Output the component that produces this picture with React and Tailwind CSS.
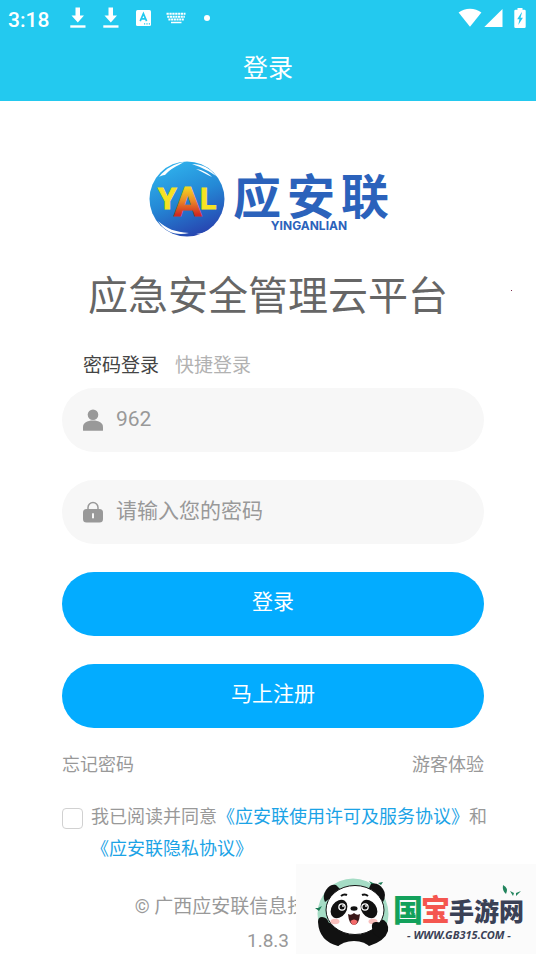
import React, { useState } from "react";

// the arrow is used twice in the status bar
const DownloadIcon = () => (
  <svg width="16" height="22" viewBox="0 0 16 22" fill="currentColor">
    <path d="M5.5 0.5h4.5v8h4L7.8 15.5 1.5 8.5h4z" />
    <rect x="0.3" y="18.3" width="15.2" height="2.4" />
  </svg>
);

const StatusBar = () => (
  <div className="flex h-9 items-center justify-between pl-2 pr-[10px] text-white">
    <div className="flex items-center">
      <span className="w-[62px] pt-1 text-[21px] font-medium leading-6">3:18</span>
      <div className="flex items-center gap-[14px]">
        <div className="flex items-center gap-[17px]">
          <DownloadIcon />
          <DownloadIcon />
          <svg width="16" height="18" viewBox="0 0 16 18">
            <rect x="0" y="1" width="15" height="16" rx="1.5" fill="currentColor" />
            <path
              d="M4.2 12.2 7.4 4.600 10.6 12.2M5.4 9.800h4"
              fill="none"
              stroke="#23c9ef"
              strokeWidth="1.7"
            />
            <path d="M8 14.8h6" stroke="#23c9ef" strokeWidth="1.3" strokeDasharray="1.2 1.2" />
          </svg>
        </div>
        <svg width="20" height="12" viewBox="0 0 20 12" stroke="currentColor" fill="none">
          <path d="M0.5 1.7h19" strokeWidth="2" strokeDasharray="2.3 0.6" />
          <path d="M1.2 4.7h17.6" strokeWidth="2" strokeDasharray="2.1 0.6" />
          <path d="M2.4 7.6h15.4" strokeWidth="2" strokeDasharray="2.1 0.6" />
          <path d="M5 10.5h10.5" strokeWidth="1.5" />
        </svg>
        <span className="ml-1 h-[6px] w-[6px] rounded-full bg-white" />
      </div>
    </div>
    <div className="flex items-center">
      <svg width="24" height="20" viewBox="0 0 24 20" fill="currentColor">
        <path d="M0.6 4.6C6.6-0.6 17.4-0.6 23.4 4.6L12 18.8z" />
      </svg>
      <svg className="ml-[2px]" width="19" height="20" viewBox="0 0 19 20" fill="currentColor">
        <path d="M18.5 1v18H0.3z" />
      </svg>
      <svg className="ml-[11px]" width="12" height="22" viewBox="0 0 12 22">
        <path
          d="M3.5 1h5v1.8h1.9q1.3 0 1.3 1.3v15.6q0 1.3-1.3 1.3H1.6q-1.3 0-1.3-1.3V4.1q0-1.3 1.3-1.3h1.9z"
          fill="currentColor"
        />
        <path d="M7.5 5.5 3.2 12.2h2.2L4.3 18 8.9 10.7H6.5L8 5.5z" fill="#23c9ef" />
      </svg>
    </div>
  </div>
);

const BrandLogo = () => (
  <svg
    className="ml-[149px] block"
    width="250"
    height="90"
    viewBox="0 -8 250 90"
    role="img"
    aria-label="应安联 YINGANLIAN"
  >
    <defs>
      <linearGradient id="ball" x1="0.2" y1="0" x2="0.6" y2="1">
        <stop offset="0" stopColor="#30b5ee" />
        <stop offset="0.5" stopColor="#2489d6" />
        <stop offset="1" stopColor="#2745b0" />
      </linearGradient>
      <linearGradient id="flame" gradientUnits="userSpaceOnUse" x1="0" y1="18" x2="0" y2="60">
        <stop offset="0.15" stopColor="#f6e222" />
        <stop offset="0.5" stopColor="#ec8e25" />
        <stop offset="0.85" stopColor="#d02a22" />
      </linearGradient>
    </defs>
    <circle cx="38" cy="38" r="37.5" fill="url(#ball)" />
    <g fill="#fff">
      <path d="M10 16C17 7 25 3 35 1c-7 4-14 7-19 13-3 0-4 1-6 2z" />
      <path d="M43 3c10 0 18 4 24 12-7-5-13-8-24-12z" />
      <path d="M47 8c7 1 12 4 16 8-6-3-10-5-16-8z" />
      <path d="M9 60c9 8 17 11 31 12-13 3-24-1-31-12z" />
      <path d="M47 73c10-1 16-5 22-11-4 8-11 13-22 11z" />
    </g>
    <g fontFamily="Roboto, sans-serif" fontWeight="700" strokeWidth="1">
      <text x="9" y="48" fontSize="30" fill="#f6e222" stroke="#f6e222">Y</text>
      <text x="25" y="55" fontSize="41" fill="url(#flame)" stroke="url(#flame)">A</text>
      <text x="51" y="48" fontSize="30" fill="#f6e222" stroke="#f6e222">L</text>
    </g>
    <g fontSize="48" fontWeight="700" fill="#2b62bb" fontFamily="'Noto Sans CJK SC', sans-serif">
      <text x="84" y="53">应</text>
      <text x="138" y="53">安</text>
      <text x="192" y="53">联</text>
    </g>
    <text
      x="160"
      y="69"
      fontSize="12"
      fontWeight="700"
      textAnchor="middle"
      fill="#2b62bb"
      fontFamily="Inter, sans-serif"
    >
      YINGANLIAN
    </text>
  </svg>
);

const UserIcon = () => (
  <svg width="22" height="22" viewBox="0 0 22 22" fill="#999">
    <circle cx="11" cy="5.7" r="5.3" />
    <path d="M1 21.200v-3C1 14 5 11.600 11 11.600s10 2.400 10 6.600v3q0 .5-.5.5h-19q-.5 0-.5-.5z" />
  </svg>
);

const LockIcon = () => (
  <svg width="22" height="22" viewBox="0 0 22 22">
    <path d="M6 9V6.500a5 5 0 0 1 10 0V9" fill="none" stroke="#999" strokeWidth="1.500" />
    <rect x="1" y="8" width="20" height="13.500" rx="3.500" fill="#999" />
    <rect x="10" y="12.300" width="2" height="5" fill="#f7f7f7" />
  </svg>
);

const Field = ({ id, label, icon, ...rest }) => (
  <div className="flex h-16 items-center gap-3 rounded-full bg-[#f7f7f7] pl-5 pr-5">
    <label htmlFor={id} aria-label={label}>
      {icon}
    </label>
    <input
      id={id}
      className="h-full min-w-0 flex-1 bg-transparent pb-[2px] text-[21px] text-[#999] outline-none placeholder:text-[#999]"
      {...rest}
    />
  </div>
);

const SiteBadge = () => (
  <svg
    className="fixed bottom-0 right-0"
    width="240"
    height="90"
    viewBox="0 0 240 90"
    role="img"
    aria-label="国宝手游网"
  >
    <rect width="240" height="90" fill="#fbfbfb" />
    {/* panda */}
    <circle cx="57" cy="50" r="35.5" fill="#a5dcc5" />
    <path d="M73 17l5 7 1-4z" fill="#1b7a55" />
    <path d="M82 19l3 2 2-3M19 44l4 3 3-5-4 2z" fill="#1b7a55" />
    <g fill="#111">
      <path d="M29 38q-3-6 1-12 4-6 10-5l5 5z" />
      <path d="M87 38q4-7 0-13-5-7-12-5l-3 6z" />
      <path d="M22 58q0-5 4-5 5 0 7 6l50 2q-2-5 2-6 8 2 7 12-3 10-19 15H42Q23 77 22 58z" />
    </g>
    <path d="M40 84q7-7 18-7t17 7l-5 2H45z" fill="#fbfbfb" />
    <ellipse cx="59" cy="46" rx="29" ry="24.5" fill="#fff" stroke="#111" />
    <g fill="#111">
      <ellipse cx="43" cy="45" rx="7.500" ry="10" transform="rotate(35 43 45)" />
      <ellipse cx="73" cy="45" rx="7.500" ry="10" transform="rotate(-35 73 45)" />
      <ellipse cx="58" cy="44.5" rx="3.5" ry="2.2" />
    </g>
    <path d="M45 32q3-2.5 6-1M66 31q3-1.5 6 1" stroke="#111" strokeWidth="2" fill="none" />
    <circle cx="46" cy="43" r="3.8" fill="#fff" />
    <circle cx="69" cy="43" r="3.8" fill="#fff" />
    <circle cx="46" cy="43" r="2.5" fill="#111" />
    <circle cx="69" cy="43" r="2.5" fill="#111" />
    <circle cx="47" cy="42" r="0.9" fill="#fff" />
    <circle cx="70" cy="42" r="0.9" fill="#fff" />
    <path d="M52 50q3 2 6-1 3 3 6 1-1 11-6 11t-6-11z" fill="#3a1718" />
    <path d="M54.5 57q3.5-3 7 0-1 4-3.5 4t-3.5-4z" fill="#f26a6a" />
    <ellipse cx="39" cy="57.5" rx="4.5" ry="2.8" fill="#f9bfbd" />
    <ellipse cx="77" cy="57.5" rx="4.5" ry="2.8" fill="#f9bfbd" />
    <path d="M76 64q-1-7 5-6 5 0 9 7l-4 9q-9-2-10-10z" fill="#111" />
    {/* leaves by the name */}
    <path d="M207 21q6 3 3 9-4-3-3-9zM214 27l4 2-1 3zM225 27l-5 2v3z" fill="#23855e" />
    <g fontFamily="'Noto Sans CJK SC', sans-serif" fontWeight="900">
      <text x="97" y="57" fontSize="30" fill="#12a15b">国</text>
      <text x="125" y="57" fontSize="29" fill="#f4564f">宝</text>
      <text x="153" y="57" fontSize="25" fill="#3a4156">手游网</text>
    </g>
    <text
      x="163"
      y="75"
      fontSize="11"
      fontWeight="700"
      fontStyle="italic"
      textAnchor="middle"
      fill="#3a4156"
      fontFamily="'Noto Sans', sans-serif"
    >
      - WWW.GB315.COM -
    </text>
  </svg>
);

export default function App() {
  const [account, setAccount] = useState("962");
  const [password, setPassword] = useState("");
  const [agreed, setAgreed] = useState(false);

  return (
    <div className="bg-white font-[Roboto,'Noto_Sans_CJK_SC',sans-serif] text-[#999]">
      <header className="h-[101px] bg-[#23c9ef]">
        <StatusBar />
        <h1 className="text-center text-[25px] leading-[66px] text-white">登录</h1>
      </header>

      <main className="pt-[52px]">
        <BrandLogo />
        <div className="relative mt-[24px]">
          <h2 className="text-center text-[40px] leading-[60px] text-[#666]">
            应急安全管理云平台
          </h2>
          <span className="absolute right-6 top-[23px] h-px w-px bg-[#803050]" />
        </div>

        <form className="pl-[62px] pr-[52px]" onSubmit={(e) => e.preventDefault()}>
          <div className="mt-[25px] flex gap-4 pl-[21px] text-[19px] leading-[28px]">
            <button type="button" className="text-[#444]">密码登录</button>
            <button type="button" className="text-[#b2b2b2]">快捷登录</button>
          </div>

          <div className="mt-2 flex flex-col gap-7">
            <Field
              id="account"
              label="账号"
              icon={<UserIcon />}
              type="text"
              value={account}
              onChange={(e) => setAccount(e.target.value)}
            />
            <Field
              id="password"
              label="密码"
              icon={<LockIcon />}
              type="password"
              placeholder="请输入您的密码"
              value={password}
              onChange={(e) => setPassword(e.target.value)}
            />
            <button type="submit" className="h-16 rounded-full bg-[#03acff] pb-[2px] text-[21px] text-white">
              登录
            </button>
            <button type="button" className="h-16 rounded-full bg-[#03acff] pb-[2px] text-[21px] text-white">
              马上注册
            </button>
          </div>

          <div className="mt-[23px] flex justify-between text-[18px] leading-[28px]">
            <a href="#forgot">忘记密码</a>
            <a href="#guest">游客体验</a>
          </div>

          <div className="mt-[22px] flex items-start gap-2 text-[18px] leading-[32px]">
            <input
              id="agree"
              type="checkbox"
              checked={agreed}
              onChange={(e) => setAgreed(e.target.checked)}
              className="mt-[7px] h-[21px] w-[21px] shrink-0 appearance-none rounded border border-[#d1d1d1] bg-white checked:bg-[#03acff]"
            />
            <label htmlFor="agree" className="whitespace-nowrap">
              我已阅读并同意
              <a href="#terms" className="text-[#1ba3e6]">《应安联使用许可及服务协议》</a>
              和<br />
              <a href="#privacy" className="text-[#1ba3e6]">《应安联隐私协议》</a>
            </label>
          </div>
        </form>

        <footer className="mt-[26px] text-center text-[19px]">
          <p className="leading-[32px]">© 广西应安联信息技术有限公司</p>
          <p className="mt-[6px] leading-6">1.8.3</p>
        </footer>
      </main>

      <SiteBadge />
    </div>
  );
}
